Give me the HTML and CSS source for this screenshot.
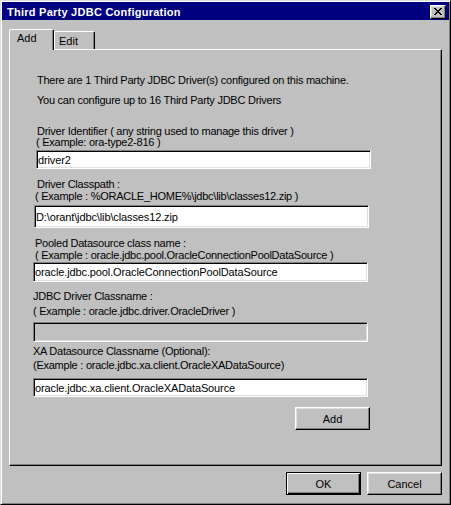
FILE: index.html
```html
<!DOCTYPE html>
<html>
<head>
<meta charset="utf-8">
<title>Third Party JDBC Configuration</title>
<link rel="stylesheet" href="styles.css">
</head>
<body>
<div class="window">
  <div class="titlebar">
    <span class="title">Third Party JDBC Configuration</span>
    <button class="close" aria-label="Close">
      <svg width="8" height="7" viewBox="0 0 8 7" shape-rendering="crispEdges"><path d="M0 0h2v1H0zM6 0h2v1H6zM1 1h2v1H1zM5 1h2v1H5zM2 2h4v1H2zM3 3h2v1H3zM2 4h4v1H2zM1 5h2v1H1zM5 5h2v1H5zM0 6h2v1H0zM6 6h2v1H6z" fill="#000"/></svg>
    </button>
  </div>
  <div class="body">
    <div class="tabs">
      <div class="tab active">Add</div>
      <div class="tab edit">Edit</div>
    </div>
    <div class="panel">
      <div class="txt info1">There are 1 Third Party JDBC Driver(s) configured on this machine.</div>
      <div class="txt info2">You can configure up to 16 Third Party JDBC Drivers</div>

      <div class="txt f1-lbl">Driver Identifier ( any string used to manage this driver )</div>
      <div class="txt f1-ex">( Example: ora-type2-816 )</div>
      <input class="edit-box f1-in" value="driver2">

      <div class="txt f2-lbl">Driver Classpath :</div>
      <div class="txt f2-ex">( Example : %ORACLE_HOME%\jdbc\lib\classes12.zip )</div>
      <input class="edit-box f2-in" value="D:\orant\jdbc\lib\classes12.zip">

      <div class="txt f3-lbl">Pooled Datasource class name :</div>
      <div class="txt f3-ex">( Example : oracle.jdbc.pool.OracleConnectionPoolDataSource )</div>
      <input class="edit-box f3-in" value="oracle.jdbc.pool.OracleConnectionPoolDataSource">

      <div class="txt f4-lbl">JDBC Driver Classname :</div>
      <div class="txt f4-ex">( Example : oracle.jdbc.driver.OracleDriver )</div>
      <input class="edit-box f4-in" value="" disabled>

      <div class="txt f5-lbl">XA Datasource Classname (Optional):</div>
      <div class="txt f5-ex">(Example : oracle.jdbc.xa.client.OracleXADataSource)</div>
      <input class="edit-box f5-in" value="oracle.jdbc.xa.client.OracleXADataSource">

      <button class="btn add-btn">Add</button>
    </div>
    <div class="footer">
      <button class="btn default">OK</button>
      <button class="btn">Cancel</button>
    </div>
  </div>
</div>
</body>
</html>
```

FILE: styles.css
```css
html, body {
  margin: 0;
  padding: 0;
  background: #c0c0c0;
}
body {
  font-family: "Liberation Sans", Arial, sans-serif;
  font-size: 11px;
  color: #000;
}
.window {
  width: 451px;
  height: 505px;
  box-sizing: border-box;
  border: 1px solid;
  border-color: #dfdfdf #000 #000 #dfdfdf;
  box-shadow: inset 1px 1px #fff, inset -1px -1px #808080;
  padding: 1px;
  display: flex;
  flex-direction: column;
  background: #c0c0c0;
}
.titlebar {
  height: 18px;
  flex: none;
  background: #000080;
  color: #fff;
  display: flex;
  justify-content: space-between;
  align-items: flex-start;
  padding: 0 3px 0 5px;
}
.title {
  margin-top: 4px;
  line-height: 13px;
  font-weight: bold;
  letter-spacing: 0.25px;
}
.close {
  margin-top: 3px;
  width: 16px;
  height: 14px;
  box-sizing: border-box;
  padding: 0;
  background: #c0c0c0;
  border: 1px solid;
  border-color: #fff #000 #000 #fff;
  box-shadow: inset -1px -1px #808080, inset 1px 1px #dfdfdf;
  display: flex;
  align-items: center;
  justify-content: center;
}
.close svg {
  display: block;
  margin: 0 0 1px 0;
}
.body {
  flex: 1;
  padding: 9px 7px 8px;
  display: flex;
  flex-direction: column;
}
.tabs {
  display: flex;
  height: 21px;
  flex: none;
}
.tab {
  box-sizing: border-box;
  border: 1px solid;
  border-color: #fff #000 transparent #fff;
  border-bottom: none;
  border-radius: 2px 2px 0 0;
  box-shadow: inset -1px 0 #808080;
  line-height: 13px;
  background: #c0c0c0;
}
.tab.active {
  width: 45px;
  height: 21px;
  padding: 2px 0 0 7px;
  position: relative;
  z-index: 1;
}
.tab.edit {
  width: 41px;
  height: 18px;
  margin-top: 2px;
  padding: 3px 0 0 4px;
}
.panel {
  height: 417px;
  flex: none;
  box-sizing: border-box;
  margin-top: -1px;
  border: 1px solid;
  border-color: #fff #000 #000 #fff;
  box-shadow: inset -1px -1px #808080;
  display: flex;
  flex-direction: column;
  align-items: flex-start;
}
.txt {
  line-height: 13px;
  height: 13px;
  white-space: nowrap;
  letter-spacing: -0.25px;
}
.info1 { margin: 24px 0 0 27px; }
.info2 { margin: 7px 0 0 27px; }

.f1-lbl { margin: 18px 0 0 27px; }
.f1-ex  { margin: -2px 0 0 26px; }
.f1-in  { margin: 1px 0 0 26px; height: 19px; }

.f2-lbl { margin: 9px 0 0 27px; }
.f2-ex  { margin: -1px 0 0 25px; }
.f2-in  { margin: 2px 0 0 24px; height: 23px; }

.f3-lbl { margin: 9px 0 0 25px; }
.f3-ex  { margin: -1px 0 0 25px; }
.f3-in  { margin: 0 0 0 23px; height: 20px; }

.f4-lbl { margin: 8px 0 0 23px; }
.f4-ex  { margin: 2px 0 0 23px; }
.f4-in  { margin: 4px 0 0 23px; height: 20px; }

.f5-lbl { margin: 3px 0 0 23px; }
.f5-ex  { margin: 1px 0 0 23px; }
.f5-in  { margin: 6px 0 0 23px; height: 19px; }

.edit-box {
  width: 335px;
  box-sizing: border-box;
  padding: 0 1px;
  font: inherit;
  letter-spacing: -0.12px;
  color: #000;
  background: #fff;
  border: 1px solid;
  border-color: #808080 #fff #fff #808080;
  box-shadow: inset 1px 1px #000, inset -1px -1px #dfdfdf;
  outline: none;
}
.edit-box:disabled {
  background: #c0c0c0;
}
.btn {
  width: 75px;
  height: 23px;
  box-sizing: border-box;
  padding: 0;
  font: inherit;
  color: #000;
  background: #c0c0c0;
  border: 1px solid;
  border-color: #fff #000 #000 #fff;
  box-shadow: inset -1px -1px #808080, inset 1px 1px #dfdfdf;
}
.btn.default {
  border-color: #000;
  box-shadow: inset 1px 1px #fff, inset -1px -1px #000, inset -2px -2px #808080;
}
.add-btn {
  margin: 10px 0 0 285px;
}
.footer {
  display: flex;
  justify-content: flex-end;
  gap: 6px;
  margin-top: 6px;
}
```
